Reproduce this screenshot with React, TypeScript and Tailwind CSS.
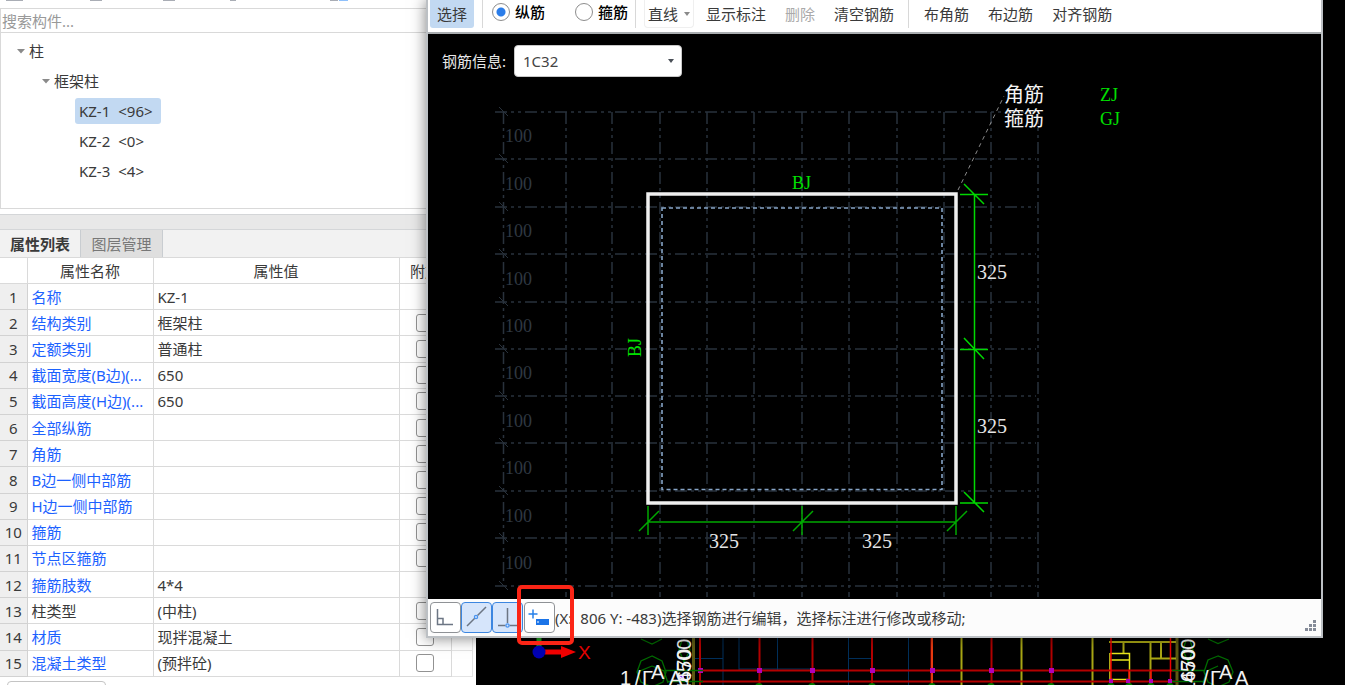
import React from "react";

type Row = { name: string; value: string; check: boolean; plain?: boolean };

const rows: Row[] = [
  { name: "名称", value: "KZ-1", check: false },
  { name: "结构类别", value: "框架柱", check: true },
  { name: "定额类别", value: "普通柱", check: true },
  { name: "截面宽度(B边)(...", value: "650", check: true },
  { name: "截面高度(H边)(...", value: "650", check: true },
  { name: "全部纵筋", value: "", check: true },
  { name: "角筋", value: "", check: true },
  { name: "B边一侧中部筋", value: "", check: true },
  { name: "H边一侧中部筋", value: "", check: true },
  { name: "箍筋", value: "", check: true },
  { name: "节点区箍筋", value: "", check: true },
  { name: "箍筋肢数", value: "4*4", check: false },
  { name: "柱类型", value: "(中柱)", check: true, plain: true },
  { name: "材质", value: "现拌混凝土", check: true },
  { name: "混凝土类型", value: "(预拌砼)", check: true },
];

const gridX = [566, 612, 660, 707, 754, 802, 849, 897, 944, 991, 1038];
const gridY = [112, 159, 207, 254, 302, 349, 396, 443, 491, 538, 586];
const labelY = [135, 183, 230, 278, 325, 372, 420, 467, 515, 562];

function Caret() {
  return (
    <svg viewBox="0 0 8 5" className="h-[5px] w-2 shrink-0" aria-hidden="true">
      <path d="M0 0H8L4 4.6Z" fill="#8a8a8a" />
    </svg>
  );
}

function TreeItem({ name, count, selected }: { name: string; count: string; selected?: boolean }) {
  return (
    <li className="flex h-[30px] items-center">
      <button
        className={
          selected
            ? "flex h-[26px] items-center gap-2 rounded-[3px] bg-[#c2d9f2] pl-1 pr-2"
            : "flex h-[26px] items-center gap-2 pl-1 pr-2"
        }
      >
        <span>{name}</span>
        <span>{count}</span>
      </button>
    </li>
  );
}

function ComponentTree() {
  return (
    <div className="h-[176px] shrink-0 border-b border-l border-[#d9d9d9] pt-[3px] leading-[30px]">
      <button className="flex h-[30px] items-center gap-1 pl-4">
        <Caret />柱
      </button>
      <button className="flex h-[30px] items-center gap-1 pl-[41px]">
        <Caret />
        框架柱
      </button>
      <ul className="pl-[74px]">
        <TreeItem name="KZ-1" count="<96>" selected />
        <TreeItem name="KZ-2" count="<0>" />
        <TreeItem name="KZ-3" count="<4>" />
      </ul>
    </div>
  );
}

function PropertyTable() {
  return (
    <table className="h-[420px] w-[472px] shrink-0 table-fixed border-collapse leading-5">
      <colgroup>
        <col className="w-[27px]" />
        <col className="w-[126px]" />
        <col className="w-[246px]" />
        <col className="w-[52px]" />
        <col className="w-[21px]" />
      </colgroup>
      <thead>
        <tr className="h-[26px]">
          <th className="border border-l-0 border-[#dadada]" aria-label="序号" />
          <th className="border border-[#dadada] p-0 font-normal">属性名称</th>
          <th className="border border-[#dadada] p-0 font-normal">属性值</th>
          <th className="border border-[#dadada] p-0 font-normal">附加</th>
          <th className="border border-[#dadada] p-0" aria-label="空" />
        </tr>
      </thead>
      <tbody>
        {rows.map((r, i) => (
          <tr key={r.name}>
            <td className="border border-l-0 border-[#d2d2d2] bg-[#efefef] p-0 text-center">{i + 1}</td>
            <td
              className={
                r.plain
                  ? "whitespace-nowrap border border-[#dadada] p-0 pl-1"
                  : "whitespace-nowrap border border-[#dadada] p-0 pl-1 text-[#1c62ff]"
              }
            >
              {r.name}
            </td>
            <td className="border border-[#dadada] p-0 pl-1">{r.value}</td>
            <td className="border border-[#dadada] p-0">
              {r.check && (
                <input
                  type="checkbox"
                  aria-label={r.name}
                  className="mx-auto block h-[18px] w-[18px] appearance-none rounded-[3px] border border-[#929292] bg-white"
                />
              )}
            </td>
            <td className="border border-[#e4e4e4] p-0" />
          </tr>
        ))}
      </tbody>
    </table>
  );
}

function LeftPanel() {
  return (
    <aside className="flex w-[476px] shrink-0 flex-col bg-white">
      <div className="h-[9px] shrink-0 border-b border-[#d9d9d9]">
        <svg viewBox="0 0 400 8" className="h-2 w-[400px]" aria-hidden="true">
          <g fill="#a9adb5">
            <rect x="6" width="17" height="1" />
            <rect x="90" width="12" height="1" />
            <rect x="163" width="12" height="1" />
            <rect x="230" width="6" height="1" />
            <rect x="330" width="8" height="1" />
          </g>
          <rect x="339" width="9" height="1" fill="#8fc0fb" />
        </svg>
      </div>
      <input
        aria-label="搜索构件"
        placeholder="搜索构件..."
        className="block h-6 w-full shrink-0 border-b border-l border-[#d9d9d9] pl-px leading-5 outline-none placeholder:text-[#999]"
      />
      <ComponentTree />
      <div className="mt-[5px] h-4 shrink-0 border-y border-[#d4d6d8] bg-[#e8e8e8]" />
      <div className="flex h-[27px] shrink-0 bg-[#f2f2f2]" role="tablist">
        <button role="tab" aria-selected="true" className="w-[81px] border-r border-[#c9cdd1] font-bold">
          属性列表
        </button>
        <button
          role="tab"
          aria-selected="false"
          className="w-[82px] border-r border-[#c9cdd1] bg-[#dfdfdf] text-[#777]"
        >
          图层管理
        </button>
      </div>
      <PropertyTable />
      <div className="ml-[7px] mt-1 h-6 w-[99px] shrink-0 rounded-t border border-[#c4c4c4]" />
    </aside>
  );
}

function SiteDrawing() {
  return (
    <svg
      viewBox="476 638 869 47"
      className="h-[47px] w-[869px] shrink-0"
      fontFamily="'Liberation Sans', sans-serif"
      role="img"
      aria-label="平面图"
    >
      <g stroke="#00305c" fill="none">
        <path d="M694 658.500H723M723 638V685M739 638V670M739 669H812M777.500 638V670M848.500 638V685M848.500 658.500H873M908.500 638V685" />
      </g>
      <g stroke="#5d5a12" strokeWidth="3">
        <path d="M693.500 638V685M1177 638V685" />
      </g>
      <g stroke="#a8a614" strokeWidth="2" fill="none">
        <path d="M961.500 638V685M1021.500 638V685M1092.500 638V685M1109 642H1176M1123.500 642V653M1150.500 642V685M1161 642V658M1150 658.500H1176" />
      </g>
      <path d="M1110 653.500H1129.500V685M1110 653V679M1110 660H1129M1110 679.500H1129" stroke="#e8e41c" strokeWidth="1.500" fill="none" />
      <g stroke="#b40000" strokeWidth="2" fill="none">
        <path d="M700 638V685M759.500 638V685M812.500 638V685M872 638V685M931.500 638V685M991.500 638V685M1051.500 638V685M700 670.500H1178M700 681.500H1178" />
      </g>
      <path d="M932 638V685" stroke="#e83a10" strokeWidth="2" />
      <path d="M1111 638V681M1129 670V681M1151 670V681M1170.500 638V681" stroke="#f00000" strokeWidth="1.500" />
      <g fill="#b000b8">
        {[700, 759, 812, 872, 932, 991, 1051].map((x) => (
          <rect key={x} x={x - 2} y="668" width="5" height="5" />
        ))}
        {[1111, 1128, 1151, 1170].map((x) => (
          <rect key={x} x={x - 2} y="679" width="4" height="4" />
        ))}
      </g>
      <g stroke="#006c00" fill="none" strokeWidth="1.300">
        <path d="M641 639L652 644L662 639M652 656L641 661L637 672L641 682L652 687L663 682L666 672L662 661ZM652 666L640 671L636 683M652 666L664 671L668 683M666 670.500H703M668 681.500H703M682 640L679 650L684 662L690 650L687 640" />
        <path d="M1208 639L1218 643.500L1229 639M1218 656L1208 660L1204 672L1208 682L1218 687L1229 682L1233 672L1228 660ZM1218 666L1207 671L1203 683M1172 670.500H1204M1172 681.500H1204M1186 640L1183 650L1188 662L1193 650L1190 640" />
      </g>
      <g fill="#007c00">
        {[759, 812, 872, 932, 991, 1051, 1111, 1129, 1151, 1170].map((x) => (
          <circle key={x} cx={x} cy="687" r="4" />
        ))}
      </g>
      <rect x="679" y="675" width="5" height="5" fill="#7a1cff" />
      <g fill="#f2f2f2" fontSize="20">
        <text transform="translate(691 683) rotate(-90)">4500</text>
        <text transform="translate(691 693) rotate(-90)">4670</text>
        <text x="620" y="685">1</text>
        <text x="635" y="685">/</text>
        <text x="642" y="685">Γ</text>
        <text x="651" y="679">A</text>
        <text x="669" y="685">A</text>
        <text transform="translate(1195 683) rotate(-90)">4500</text>
        <text transform="translate(1195 693) rotate(-90)">1670</text>
        <text x="1203" y="685">/</text>
        <text x="1210" y="685">Γ</text>
        <text x="1219" y="679">A</text>
        <text x="1235" y="685">A</text>
      </g>
      <path d="M539 638V647" stroke="#1fa01f" strokeWidth="5" />
      <path d="M545 652H563" stroke="#f40000" strokeWidth="5" />
      <path d="M561 646L576 652L561 658Z" fill="#f40000" />
      <circle cx="539" cy="652" r="6.500" fill="#0000b4" />
      <text x="578" y="659" fontSize="19" fill="#e80000">
        X
      </text>
    </svg>
  );
}

function SectionDrawing() {
  return (
    <svg
      viewBox="428 34 893 565"
      className="block h-[565px] w-[893px]"
      fontFamily="'Liberation Serif', 'Noto Sans CJK SC', serif"
      role="img"
      aria-label="柱截面"
    >
      <g stroke="#29323c" strokeWidth="1.500" strokeDasharray="12 4 3 4 3 4" fill="none">
        {gridX.map((x) => (
          <path key={x} d={`M${x} 112V597`} />
        ))}
        {gridY.map((y) => (
          <path key={y} d={`M495 ${y}H1036`} />
        ))}
        <path d="M503.500 112V586" />
      </g>
      <g stroke="#29323c">
        {gridY.map((y) => (
          <path key={y} d={`M499 ${y - 5}L508 ${y + 4}`} />
        ))}
      </g>
      <g fill="#2f3842" fontSize="18">
        {labelY.map((y) => (
          <text key={y} x="505" y={y + 7}>
            100
          </text>
        ))}
      </g>
      <path d="M958 190L1004 96" stroke="#8c8c8c" strokeDasharray="4 4" />
      <rect x="648" y="194" width="308" height="309" fill="none" stroke="#f0f0f0" strokeWidth="3.500" />
      <rect x="662" y="208" width="280" height="281.500" fill="none" stroke="#86a4c6" strokeWidth="1.600" strokeDasharray="4 3" />
      <g stroke="#00d800" strokeWidth="1.500" fill="none">
        <path d="M974.500 194V503M960 194.500H988M960 349.500H988M960 503H988M964 184L984 204M964 338L984 359M964 492L984 512" />
        <path d="M648 522H956M648 506V535M802 506V535M956 506V535M639 531L659 511M793 531L813 511M947 531L967 511" stroke="#00a800" />
      </g>
      <g fill="#00e000" fontSize="18">
        <text x="792" y="189">BJ</text>
        <text transform="translate(641 357) rotate(-90)">BJ</text>
        <text x="1100" y="101">ZJ</text>
        <text x="1100" y="125">GJ</text>
      </g>
      <g fill="#e6e6e6" fontSize="20">
        <text x="977" y="279">325</text>
        <text x="977" y="433">325</text>
        <text x="709" y="548">325</text>
        <text x="862" y="548">325</text>
      </g>
      <g fill="#f4f4f4" fontSize="20">
        <text x="1004" y="102">角筋</text>
        <text x="1004" y="126">箍筋</text>
      </g>
    </svg>
  );
}

function Radio({ label, checked }: { label: string; checked?: boolean }) {
  return (
    <label className="mb-[5px] flex items-center gap-[5px] font-medium text-black">
      <input
        type="radio"
        name="bar-kind"
        defaultChecked={checked}
        className="m-0 h-[18px] w-[18px] appearance-none rounded-full border border-[#8d8d8d] bg-white checked:bg-[radial-gradient(circle,#2b7de9_4px,#ffffff_5px)]"
      />
      {label}
    </label>
  );
}

function Toolbar() {
  return (
    <div
      className="flex h-[34px] items-center whitespace-nowrap border-b-2 border-[#a9adb0] bg-white pb-1 pl-0.5"
      role="toolbar"
    >
      <button className="h-7 w-11 rounded-b-[3px] bg-[#c2d9f2]">选择</button>
      <span className="ml-2 h-7 w-px bg-[#d8d8d8]" />
      <span className="ml-[9px] flex gap-[30px]">
        <Radio label="纵筋" checked />
        <Radio label="箍筋" />
      </span>
      <span className="ml-[7px] h-7 w-px bg-[#d8d8d8]" />
      <button className="ml-2 flex h-7 items-center gap-1.5 rounded-b border border-t-0 border-[#efefef] px-[3px]">
        直线
        <svg viewBox="0 0 6 4" className="h-1 w-1.5" aria-hidden="true">
          <path d="M0 0H6L3 4Z" fill="#8a8a8a" />
        </svg>
      </button>
      <button className="ml-3">显示标注</button>
      <button className="ml-[19px] text-[#aaa]" disabled>
        删除
      </button>
      <button className="ml-[19px]">清空钢筋</button>
      <span className="ml-[14px] h-7 w-px bg-[#d8d8d8]" />
      <button className="ml-[15px]">布角筋</button>
      <button className="ml-[19px]">布边筋</button>
      <button className="ml-[19px]">对齐钢筋</button>
    </div>
  );
}

function StatusBar() {
  const off = "flex h-[31px] w-[31px] items-center justify-center rounded-[4px] border border-[#8f9296] bg-white";
  const on = "flex h-[31px] w-[31px] items-center justify-center rounded-[4px] border border-[#3c86e0] bg-[#d6e5fb]";
  return (
    <footer className="flex h-[37px] items-center bg-[#fcfcfc] pl-0.5">
      <button className={off} aria-label="正交">
        <svg viewBox="0 0 29 29" className="h-[29px] w-[29px]" fill="none" stroke="#6c7684" strokeWidth="1.500">
          <path d="M6.500 6V21.500H22M6.500 15.500H12V21.500" />
        </svg>
      </button>
      <button className={on} aria-label="中点">
        <svg viewBox="0 0 29 29" className="h-[29px] w-[29px]" fill="none" stroke="#6c7684" strokeWidth="1.500">
          <path d="M5 23L13 15M15.500 12.500L24 4" />
          <circle cx="14" cy="14" r="1.600" stroke="#4a94f0" strokeWidth="1.300" />
        </svg>
      </button>
      <button className={on} aria-label="垂点">
        <svg viewBox="0 0 29 29" className="h-[29px] w-[29px]" fill="none" stroke="#6c7684" strokeWidth="1.500">
          <path d="M14.500 5V20M5 22.500H12.500M16.500 22.500H24" />
          <circle cx="14.500" cy="22.500" r="1.600" stroke="#4a94f0" strokeWidth="1.300" />
        </svg>
      </button>
      <span className="relative ml-px">
        <button className={off} aria-label="动态输入">
          <svg viewBox="0 0 29 29" className="h-[29px] w-[29px]" fill="none">
            <path d="M8 6.500V15.500M3.500 11H12.500" stroke="#2680ea" strokeWidth="1.500" />
            <rect x="11" y="16" width="13" height="6" fill="#1b74e8" />
            <path d="M13 18V20" stroke="#fff" />
          </svg>
        </button>
        <span className="pointer-events-none absolute -left-[7px] -top-[17px] z-10 h-[60px] w-[57px] rounded-[5px] border-4 border-[#fb2516]" />
      </span>
      <p className="flex grow gap-2 whitespace-nowrap">
        <span>(X:</span>
        <span>806 Y: -483)选择钢筋进行编辑，选择标注进行修改或移动;</span>
      </p>
      <svg viewBox="0 0 12 12" className="mr-1 mt-4 h-3 w-3" fill="#858b98" aria-hidden="true">
        <path d="M8 0h3v3h-3zM4 4h3v3h-3zM8 4h3v3h-3zM0 8h3v3h-3zM4 8h3v3h-3zM8 8h3v3h-3z" />
      </svg>
    </footer>
  );
}

function SectionEditor() {
  return (
    <section className="absolute left-[426px] right-[22px] top-0 border-2 border-t-0 border-[#bcc0c4] bg-black shadow-[0_0_14px_rgba(0,0,0,0.5)]">
      <Toolbar />
      <div className="relative overflow-hidden">
        <SectionDrawing />
        <div className="absolute left-[14px] top-[11px] flex items-center gap-2">
          <label htmlFor="bar-info" className="text-[#e8e8e8]">
            钢筋信息:
          </label>
          <span className="relative flex items-center">
            <select
              id="bar-info"
              className="h-8 w-[168px] appearance-none rounded-[4px] border border-[#c8c8c8] bg-white pl-2 text-[#444]"
            >
              <option>1C32</option>
            </select>
            <svg viewBox="0 0 6 4" className="pointer-events-none absolute right-2 h-1 w-1.5" aria-hidden="true">
              <path d="M0 0H6L3 4Z" fill="#4a5058" />
            </svg>
          </span>
        </div>
      </div>
      <StatusBar />
    </section>
  );
}

export default function App() {
  return (
    <main className="relative flex h-screen overflow-hidden bg-black font-['Noto_Sans','Noto_Sans_CJK_SC',sans-serif] text-[15px] leading-5 text-[#3a3a3a]">
      <LeftPanel />
      <div className="flex min-w-0 grow flex-col justify-end overflow-hidden bg-black">
        <SiteDrawing />
      </div>
      <SectionEditor />
    </main>
  );
}
